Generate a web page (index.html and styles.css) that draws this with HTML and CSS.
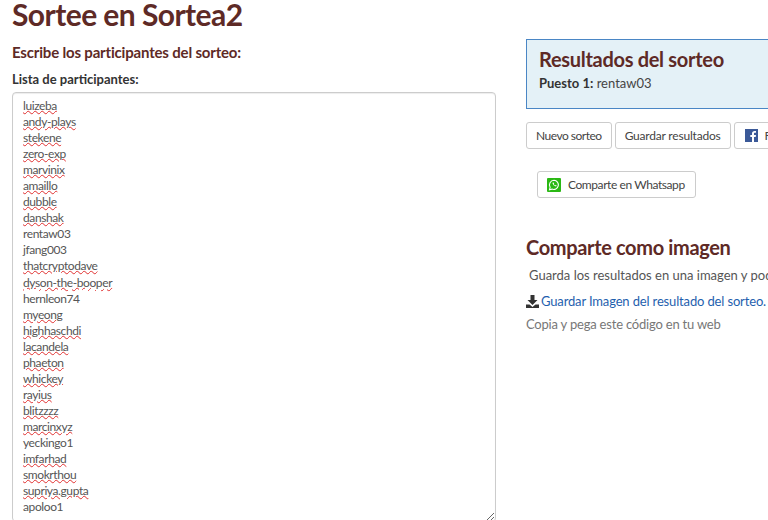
FILE: index.html
```html
<!DOCTYPE html>
<html lang="es">
<head>
    <meta charset="UTF-8">
    <meta name="viewport" content="width=device-width, initial-scale=1.0">
    <title>Sortee en Sortea2</title>
    <link rel="stylesheet" href="styles.css">
</head>
<body>
    <div class="page">
        <h1>Sortee en Sortea2</h1>
        <div class="columns">
            <div class="left">
                <h2>Escribe los participantes del sorteo:</h2>
                <label class="list-label">Lista de participantes:</label>
                <div class="names">
                    <div><span class="typo">luizeba</span></div>
                    <div><span class="typo">andy-plays</span></div>
                    <div><span class="typo">stekene</span></div>
                    <div><span class="typo">zero-exp</span></div>
                    <div><span class="typo">marvinix</span></div>
                    <div><span class="typo">amaillo</span></div>
                    <div><span class="typo">dubble</span></div>
                    <div><span class="typo">danshak</span></div>
                    <div>rentaw03</div>
                    <div>jfang003</div>
                    <div><span class="typo">thatcryptodave</span></div>
                    <div><span class="typo">dyson-the-booper</span></div>
                    <div>hernleon74</div>
                    <div><span class="typo">myeong</span></div>
                    <div><span class="typo">highhaschdi</span></div>
                    <div><span class="typo">lacandela</span></div>
                    <div><span class="typo">phaeton</span></div>
                    <div><span class="typo">whickey</span></div>
                    <div><span class="typo">rayius</span></div>
                    <div><span class="typo">blitzzzz</span></div>
                    <div><span class="typo">marcinxyz</span></div>
                    <div>yeckingo1</div>
                    <div><span class="typo">imfarhad</span></div>
                    <div><span class="typo">smokrthou</span></div>
                    <div><span class="typo">supriya.gupta</span></div>
                    <div>apoloo1</div>
                </div>
            </div>
            <div class="right">
                <div class="results">
                    <h2 class="results-title">Resultados del sorteo</h2>
                    <p><b>Puesto 1:</b> rentaw03</p>
                </div>
                <div class="actions">
                    <button class="new-draw">Nuevo sorteo</button>
                    <button class="save-results">Guardar resultados</button>
                    <button class="fb">
                        <svg width="13" height="13" viewBox="0 0 13 13"><rect width="13" height="13" fill="#3b5998"/><path d="M9 13V8h1.700l.3-2H9V4.800c0-.6.200-1 1-1h1V2.100C10.700 2 10.200 2 9.600 2 8 2 7 3 7 4.600V6H5.300v2H7v5z" fill="#fff"/></svg>
                        Facebook
                    </button>
                </div>
                <div class="whatsapp-row">
                    <button class="whatsapp">
                        <svg width="14" height="14" viewBox="0 0 14 14"><rect width="14" height="14" rx="1" fill="#2ab814"/><path d="M7 2.300a4.600 4.600 0 0 0-3.900 7L2.500 11.700l2.400-.6A4.600 4.600 0 1 0 7 2.300z" fill="none" stroke="#fff" stroke-width="1.100"/><path d="M5.400 4.800c.4 2 1.700 3.300 3.700 3.800l.6-1-1.200-.6-.5.500c-.6-.3-1-.8-1.300-1.400l.5-.5-.6-1.200z" fill="#fff"/></svg>
                        Comparte en Whatsapp
                    </button>
                </div>
                <h2 class="share-title">Comparte como imagen</h2>
                <p class="share-text">Guarda los resultados en una imagen y podrás compartirlos donde quieras</p>
                <p class="save-line">
                    <svg width="13" height="13" viewBox="0 0 13 13"><path d="M4.500 0h4v5h3L6.500 10 1.500 5h3z" fill="#333"/><path d="M0 9.500h3.500l3 2.500 3-2.500H13V13H0z" fill="#333"/></svg>
                    <a href="#">Guardar Imagen del resultado del sorteo.</a>
                </p>
                <p class="copy-text">Copia y pega este código en tu web</p>
            </div>
        </div>
    </div>
</body>
</html>
```

FILE: styles.css
```css
html, body {
    margin: 0;
    height: 520px;
    overflow: hidden;
    background-color: #fff;
}

body {
    font-family: Lato, Arial, sans-serif;
    font-size: 13px;
    color: #555;
}

.page {
    padding-left: 12px;
}

h1 {
    margin: -6px 0 0;
    font-size: 30px;
    line-height: 40px;
    letter-spacing: -0.55px;
    font-weight: 700;
    color: #5e2a26;
    white-space: nowrap;
}

h2 {
    margin: 0;
    font-weight: 700;
    color: #5e2a26;
}

.columns {
    display: flex;
    gap: 30px;
    margin-top: 4px;
}

.left {
    flex: 0 0 484px;
}

.left h2 {
    font-size: 15px;
    line-height: 20px;
    letter-spacing: -0.18px;
    margin-top: 4px;
}

.list-label {
    display: block;
    margin-top: 7px;
    font-weight: 700;
    line-height: 20px;
    color: #333;
}

.names {
    box-sizing: border-box;
    height: 430px;
    margin-top: 3px;
    padding: 5px 10px;
    border: 1px solid #ccc;
    border-radius: 4px;
    box-shadow: inset 0 1px 1px rgba(0, 0, 0, 0.075);
    font-size: 12px;
    letter-spacing: -0.4px;
    line-height: 16.04px;
    overflow: hidden;
    resize: both;
}

.typo {
    text-decoration: underline wavy #e03030 1px;
    text-underline-offset: 0;
}

.right {
    flex: 0 0 400px;
    margin-top: 1px;
}

.results {
    box-sizing: border-box;
    height: 70px;
    padding: 6px 12px;
    background-color: #e4f1f7;
    border: 1px solid #4a86c5;
}

.results-title {
    font-size: 20px;
    line-height: 26px;
    letter-spacing: -0.3px;
}

.results p {
    margin: 3px 0 0;
    color: #444;
}

.results b {
    color: #333;
}

.actions {
    display: flex;
    gap: 3px;
    margin-top: 13px;
}

button {
    font-family: inherit;
    font-size: 12px;
    letter-spacing: -0.25px;
    color: #444;
    background-color: #fff;
    border: 1px solid #ccc;
    border-radius: 3px;
    height: 27px;
    padding: 0 9px;
    white-space: nowrap;
}

.new-draw {
    letter-spacing: -0.5px;
}

.save-results {
    letter-spacing: -0.2px;
}

.fb {
    display: flex;
    align-items: center;
    gap: 7px;
    padding-left: 10px;
}

.whatsapp-row {
    margin: 22px 0 0 11px;
}

.whatsapp {
    display: flex;
    align-items: center;
    gap: 7px;
    padding-right: 10px;
    letter-spacing: -0.42px;
}

.share-title {
    margin-top: 36px;
    font-size: 20px;
    line-height: 26px;
    letter-spacing: -0.35px;
}

.share-text {
    margin: 7px 0 0 3px;
    white-space: nowrap;
}

.save-line {
    margin: 10px 0 0;
    display: flex;
    align-items: center;
    gap: 2px;
    letter-spacing: -0.15px;
    white-space: nowrap;
}

a {
    color: #1f5fae;
    text-decoration: none;
}

.copy-text {
    margin: 7px 0 0;
    color: #777;
    letter-spacing: -0.2px;
}
```
